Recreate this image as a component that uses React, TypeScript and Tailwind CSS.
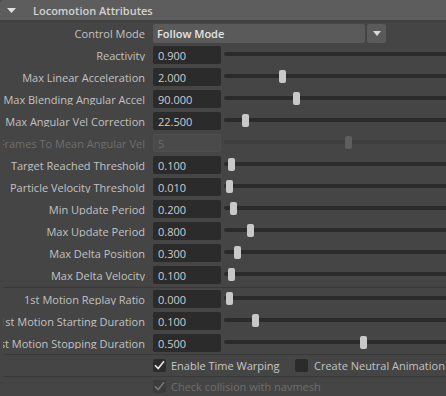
import React from "react";

type Row = { label: string; value: string; handle: number | null; disabled?: boolean };

const rowsA: Row[] = [
  { label: "Reactivity", value: "0.900", handle: null },
  { label: "Max Linear Acceleration", value: "2.000", handle: 279 },
  { label: "Max Blending Angular Accel", value: "90.000", handle: 293 },
  { label: "Max Angular Vel Correction", value: "22.500", handle: 242 },
  { label: "Frames To Mean Angular Vel", value: "5", handle: 345, disabled: true },
  { label: "Target Reached Threshold", value: "0.100", handle: 228 },
  { label: "Particle Velocity Threshold", value: "0.010", handle: 226 },
  { label: "Min Update Period", value: "0.200", handle: 230 },
  { label: "Max Update Period", value: "0.800", handle: 247 },
  { label: "Max Delta Position", value: "0.300", handle: 234 },
  { label: "Max Delta Velocity", value: "0.100", handle: 228 },
];

const rowsB: Row[] = [
  { label: "1st Motion Replay Ratio", value: "0.000", handle: 226 },
  { label: "1st Motion Starting Duration", value: "0.100", handle: 252 },
  { label: "1st Motion Stopping Duration", value: "0.500", handle: 360 },
];

function Label({ text, disabled }: { text: string; disabled?: boolean }) {
  return (
    <div className="ml-[3px] w-[142px] shrink-0 overflow-hidden flex justify-end">
      <span
        className={
          "whitespace-nowrap shrink-0 " + (disabled ? "text-[#6e6e6e]" : "text-[#c2c2c2]")
        }
      >
        {text}
      </span>
    </div>
  );
}

function FieldRow({ row }: { row: Row }) {
  return (
    <div className="flex items-center h-[22px]">
      <Label text={row.label} disabled={row.disabled} />
      <div
        className={
          "ml-[8px] w-[68px] h-[18px] shrink-0 rounded-[2px] flex items-center " +
          (row.disabled
            ? "bg-[#4a4a4a] border border-[#4f4f4f] text-[#6a6a6a] pl-[4px]"
            : "bg-[#2b2b2b] text-[#cdcdcd] pl-[5px]")
        }
      >
        {row.value}
      </div>
      <div className="relative ml-[3px] w-[260px] h-[13px] shrink-0 mb-[1px]">
        <div
          className={
            "absolute left-0 right-0 top-[4px] h-[4px] rounded-full " +
            (row.disabled ? "bg-[#3e3e3e]" : "bg-[#2b2b2b]")
          }
        />
        {row.handle !== null && (
          <div
            className={
              "absolute top-0 w-[7px] h-[13px] rounded-[2px] " +
              (row.disabled ? "bg-[#5e5e5e]" : "bg-[#c8c8c8]")
            }
            style={{ left: row.handle - 224 }}
          />
        )}
      </div>
    </div>
  );
}

function Check({ disabled, checked = true }: { disabled?: boolean; checked?: boolean }) {
  return (
    <div
      className={
        "w-[13px] h-[13px] shrink-0 rounded-[2px] flex items-center justify-center " +
        (disabled ? "bg-[#3c3c3c]" : "bg-[#2b2b2b]")
      }
    >
      {checked && (
        <svg width="13" height="13" viewBox="0 0 13 13">
          <path
            d="M2.5 6.8 L5.2 9.6 L10.5 2.8"
            fill="none"
            stroke={disabled ? "#777777" : "#e8e8e8"}
            strokeWidth="1.6"
            strokeLinecap="square"
          />
        </svg>
      )}
    </div>
  );
}

function Sep() {
  return <div className="ml-[4px] h-[1px] bg-[#393939]" />;
}

export default function App() {
  return (
    <div
      className="w-[446px] h-[396px] overflow-hidden bg-[#454545] text-[11px] leading-none"
      style={{ fontFamily: "'Open Sans', 'Noto Sans', sans-serif" }}
    >
      <div className="h-[20px] bg-[#5d5d5d] flex items-center rounded-tl-[3px]">
        <svg width="9" height="5" viewBox="0 0 9 5" className="ml-[7px]">
          <path d="M0 0 H9 L4.5 5 Z" fill="#e0e0e0" />
        </svg>
        <span className="ml-[17px] font-semibold text-[#d2d2d2]">Locomotion Attributes</span>
      </div>
      <div className="h-[2px] bg-[#3f3f3f]" />
      <div className="flex items-center h-[22px]">
        <Label text="Control Mode" />
        <div className="ml-[8px] w-[212px] h-[19px] shrink-0 rounded-[2px] bg-[#5a5a5a] flex items-center pl-[4px] font-semibold text-[#e4e4e4]">
          Follow Mode
        </div>
        <div className="ml-[2px] w-[19px] h-[19px] shrink-0 rounded-[2px] bg-[#5a5a5a] flex items-center justify-center">
          <svg width="8" height="5" viewBox="0 0 8 5">
            <path d="M0 0 H8 L4 5 Z" fill="#d8d8d8" />
          </svg>
        </div>
      </div>
      {rowsA.map((r) => (
        <FieldRow key={r.label} row={r} />
      ))}
      <div className="h-[1px]" />
      <Sep />
      {rowsB.map((r) => (
        <FieldRow key={r.label} row={r} />
      ))}
      <Sep />
      <div className="flex items-center h-[21px]">
        <div className="ml-[153px] w-[142px] shrink-0 flex items-center">
          <Check />
          <span className="ml-[5px] whitespace-nowrap text-[#c8c8c8]">Enable Time Warping</span>
        </div>
        <div className="flex items-center">
          <Check checked={false} />
          <span className="ml-[6px] whitespace-nowrap text-[#c2c2c2]">Create Neutral Animation</span>
        </div>
      </div>
      <Sep />
      <div className="flex items-center h-[19px]">
        <div className="ml-[153px] flex items-center">
          <Check disabled />
          <span className="ml-[5px] whitespace-nowrap text-[#6e6e6e]">Check collision with navmesh</span>
        </div>
      </div>
    </div>
  );
}
